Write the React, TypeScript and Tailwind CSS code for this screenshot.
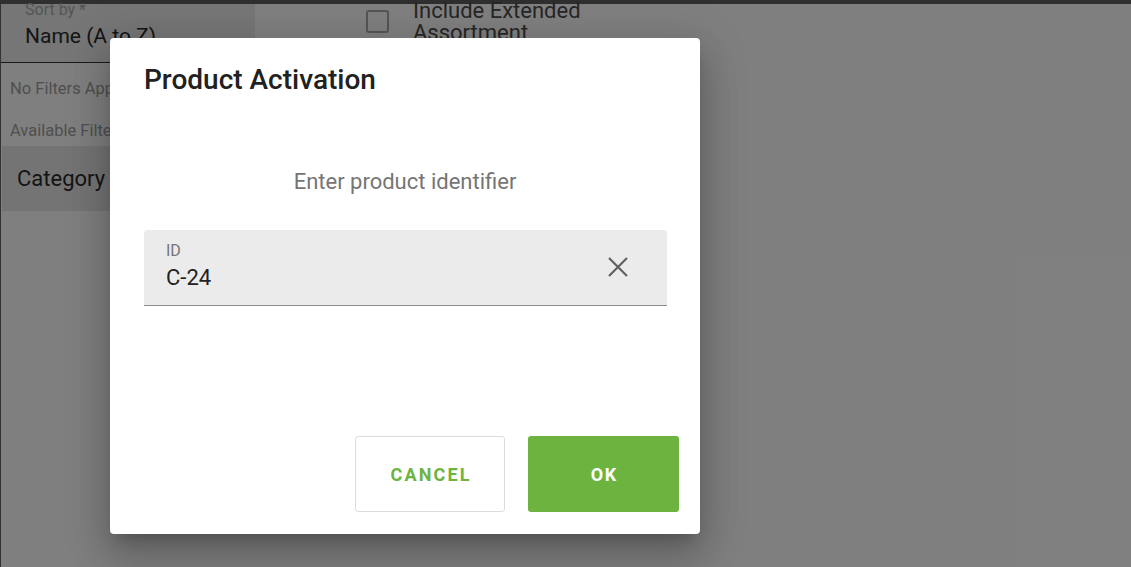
const font = { fontFamily: "Roboto, 'Noto Sans', sans-serif" };

function Backdrop() {
  return (
    <div className="flex h-full w-full flex-col bg-white">
      {/* top app bar edge */}
      <div className="h-[4px] w-full shrink-0 bg-[#5e5e5e]" />
      <div className="flex flex-1 border-l border-[#666]">
        {/* left filter column */}
        <div className="flex w-[254px] shrink-0 flex-col">
          <div className="h-[59px] border-b border-[#333] bg-[#ececec] pl-[24px]">
            <div className="-mt-[2px] text-[16px] leading-[16px] text-[#aaa]">Sort by *</div>
            <div className="mt-[6px] text-[21px] leading-[24px] text-[#2a2a2a]">Name (A to Z)</div>
          </div>
          <div className="mt-[16px] whitespace-nowrap pl-[9px] text-[16.5px] leading-[20px] text-[#9e9e9e]">No Filters Applied</div>
          <div className="mt-[22px] whitespace-nowrap pl-[9px] text-[16.5px] leading-[20px] text-[#9e9e9e]">Available Filters</div>
          <div className="mt-[5px] ml-[1px] flex h-[65px] items-center bg-[#e8e8e8] pl-[15px] text-[22px] text-[#2a2a2a]">
            Category
          </div>
        </div>
        {/* extended assortment toggle */}
        <div className="ml-[111px] flex items-start gap-[24px] pt-[6px]">
          <div className="h-[23px] w-[23px] rounded-[3px] border-2 border-[#aaa]" />
          <div className="-mt-[10px] w-[200px] text-[22px] leading-[22px] text-[#4c4c4c]">Include Extended Assortment</div>
        </div>
      </div>
    </div>
  );
}

function ProductActivationDialog() {
  return (
    <div className="absolute left-[110px] top-[38px] flex h-[496px] w-[590px] flex-col rounded-[4px] bg-white shadow-[0_11px_15px_-7px_rgba(0,0,0,0.2),0_24px_38px_3px_rgba(0,0,0,0.14),0_9px_46px_8px_rgba(0,0,0,0.12)]">
      <h2 className="pl-[34px] pt-[26px] text-[28px] font-medium leading-[32px] text-[#212121]">Product Activation</h2>
      <p className="mt-[73px] text-center text-[22px] leading-[26px] text-[#757575]">Enter product identifier</p>

      <div className="ml-[34px] mt-[35px] flex h-[76px] w-[523px] items-start rounded-t-[4px] border-b border-[#8c8c8c] bg-[#ebebeb] pl-[22px] pr-[39px]">
        <div className="flex-1 pt-[12px]">
          <div className="text-[16px] leading-[18px] text-[#757575]">ID</div>
          <div className="mt-[5px] text-[22px] leading-[26px] text-[#212121]">C-24</div>
        </div>
        <svg className="mt-[27px] h-[20px] w-[20px] text-[#616161]" viewBox="0 0 20 20" fill="none" stroke="currentColor" strokeWidth="2.2">
          <path d="M1 1 L19 19 M19 1 L1 19" />
        </svg>
      </div>

      <div className="mt-auto flex justify-end gap-[23px] pb-[22px] pr-[21px]">
        <button className="h-[76px] w-[150px] rounded-[3px] border border-[#dcdcdc] bg-white pl-[0.12em] text-[18px] font-bold tracking-[0.12em] text-[#6db33f]">
          CANCEL
        </button>
        <button className="h-[76px] w-[151px] rounded-[3px] bg-[#6db33f] pl-[0.08em] text-[18px] font-bold tracking-[0.08em] text-white">
          OK
        </button>
      </div>
    </div>
  );
}

export default function App() {
  return (
    <div className="relative h-[567px] w-[1131px] overflow-hidden" style={font}>
      <Backdrop />
      <div className="absolute inset-0 bg-black/50" />
      <ProductActivationDialog />
    </div>
  );
}
